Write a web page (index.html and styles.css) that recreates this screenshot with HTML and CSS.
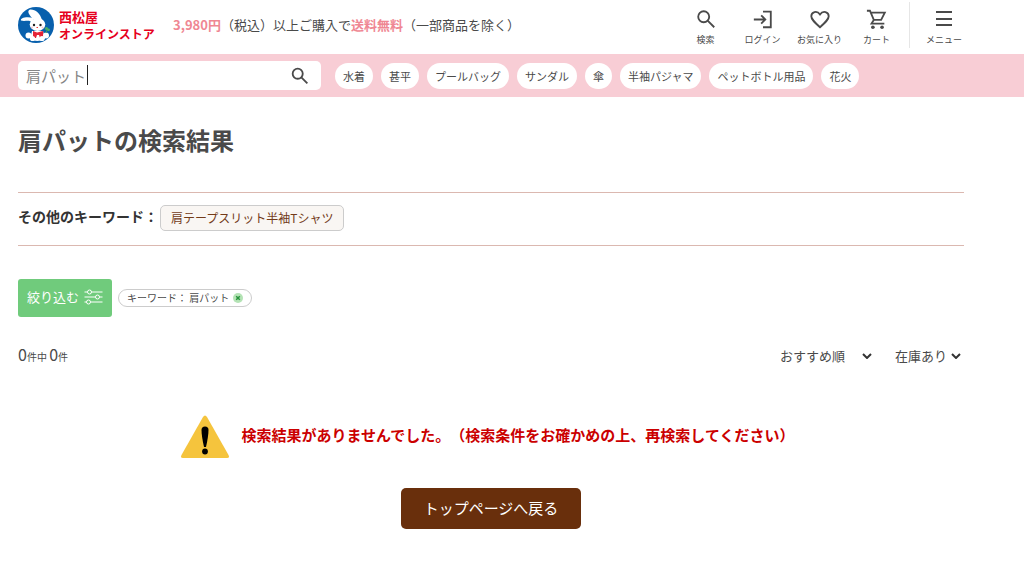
FILE: index.html
```html
<!DOCTYPE html>
<html lang="ja">
<head>
<meta charset="utf-8">
<meta name="viewport" content="width=device-width, initial-scale=1">
<title>肩パットの検索結果 | 西松屋オンラインストア</title>
<link rel="stylesheet" href="styles.css">
</head>
<body>
<header class="header">
  <a class="logo" href="#">
    <svg class="logo-mark" viewBox="0 0 36 36" aria-hidden="true">
      <circle cx="18" cy="18" r="18" fill="#0860ad"/>
      <path d="M14 16C12 12 7 15 3 13.500C2 11 8 9 16 11Z" fill="#fff"/>
      <path d="M15 12C12 9 8 4 12 2.500C17 2 22 6 24 13Z" fill="#fff"/>
      <ellipse cx="19.500" cy="17.500" rx="7.800" ry="6.500" fill="#fff"/>
      <path d="M14 24h11l2 8q-8 4-15 0Z" fill="#fff"/>
      <path d="M15 24l4 1.500 6-1.500 1 7h-4l-1-3h-2l-1 3h-3Z" fill="#e52335"/>
      <circle cx="10.500" cy="28.500" r="3" fill="#fff"/><circle cx="28" cy="28.500" r="3" fill="#fff"/>
      <circle cx="14.500" cy="31.500" r="2.600" fill="#fff"/><circle cx="24" cy="31.500" r="2.600" fill="#fff"/>
      <circle cx="16" cy="18" r="1.200" fill="#222"/><circle cx="22.500" cy="18" r="1.200" fill="#222"/>
      <path d="M18.500 20.500h1.500" stroke="#e33" stroke-width="1"/>
      <circle cx="14" cy="20.500" r="1" fill="#f8c4ca"/><circle cx="24.500" cy="20.500" r="1" fill="#f8c4ca"/>
      <path d="M28 26l1-3" stroke="#3b9e5a"/><circle cx="28.500" cy="21.500" r="1.600" fill="#4cae62"/><circle cx="30.500" cy="22.800" r="1.400" fill="#4cae62"/>
    </svg>
    <span class="logo-text"><span class="logo-name">西松屋</span><span class="logo-sub">オンラインストア</span></span>
  </a>
  <p class="promo"><strong>3,980円</strong>（税込）以上ご購入で<strong>送料無料</strong>（一部商品を除く）</p>
  <nav class="tools">
    <a class="tool" href="#"><svg class="icon" viewBox="0 0 24 24"><circle cx="9.500" cy="9.500" r="6"/><path d="M13.800 13.800L21 21"/></svg>検索</a>
    <a class="tool" href="#"><svg class="icon" viewBox="0 0 24 24"><path d="M12 4h8.500v17H12M2 12.500h12M10 8l4.500 4.500-4.500 4.500"/></svg>ログイン</a>
    <a class="tool" href="#"><svg class="icon" viewBox="0 0 24 24"><path d="M12 21C5 14.500 2.500 12 2.500 9C2.500 4.500 8.500 2 12 7C15.500 2 21.500 4.500 21.500 9C21.500 12 19 14.500 12 21Z"/></svg>お気に入り</a>
    <a class="tool" href="#"><svg class="icon" viewBox="0 0 24 24"><path d="M1 3h3.300l4.200 10h8L20.500 5H5.500M8.500 13L6 17H20"/><circle class="dot" cx="7.500" cy="21" r="2"/><circle class="dot" cx="17.500" cy="21" r="2"/></svg>カート</a>
    <button class="tool menu" type="button"><svg class="icon" viewBox="0 0 22 22"><path d="M3 4h16M3 11h16M3 17h16"/></svg>メニュー</button>
  </nav>
</header>
<div class="searchbar">
  <form class="search" role="search">
    <input class="search-input" type="text" aria-label="キーワード検索" value="肩パット">
    <span class="caret"></span>
    <button class="search-button" type="button" aria-label="検索"><svg class="icon" viewBox="0 0 24 24"><circle cx="9.500" cy="9.500" r="5.500"/><path d="M13.500 13.500L20 20"/></svg></button>
  </form>
  <nav class="tags">
    <a class="tag" href="#">水着</a><a class="tag" href="#">甚平</a><a class="tag" href="#">プールバッグ</a><a class="tag" href="#">サンダル</a><a class="tag" href="#">傘</a><a class="tag" href="#">半袖パジャマ</a><a class="tag" href="#">ペットボトル用品</a><a class="tag" href="#">花火</a>
  </nav>
</div>
<main class="main">
  <h1 class="title">肩パットの検索結果</h1>
  <section class="related">
    <h2 class="related-title">その他のキーワード：</h2>
    <a class="related-link" href="#">肩テープスリット半袖Tシャツ</a>
  </section>
  <div class="filters">
    <button class="filter-button" type="button">絞り込む
      <svg class="sliders" viewBox="0 0 18 16" aria-hidden="true"><path d="M0 3h3M7 3h11M0 8h11M15 8h3M0 13h2M6 13h12"/><circle cx="5" cy="3" r="2"/><circle cx="13" cy="8" r="2"/><circle cx="4" cy="13" r="2"/></svg>
    </button>
    <button class="chip" type="button">キーワード： 肩パット
      <svg class="chip-close" viewBox="0 0 10 10" aria-hidden="true"><circle cx="5" cy="5" r="5" fill="#b4e3b5"/><path d="M3.200 3.200l3.600 3.600M6.800 3.200L3.200 6.800" stroke="#27933b" stroke-width="1.500"/></svg>
    </button>
  </div>
  <div class="results-bar">
    <p class="count"><b>0</b>件中 <b>0</b>件</p>
    <div class="sorts">
      <span class="select-wrap wide"><select class="select" aria-label="並び順"><option>おすすめ順</option></select><svg class="chevron" viewBox="0 0 10 6"><path d="M1 1l4 4 4-4"/></svg></span>
      <span class="select-wrap"><select class="select" aria-label="在庫"><option>在庫あり</option></select><svg class="chevron" viewBox="0 0 10 6"><path d="M1 1l4 4 4-4"/></svg></span>
    </div>
  </div>
  <div class="notice">
    <svg class="warning" viewBox="0 0 50 44" aria-hidden="true"><path d="M23 2q2-3 4 0l21.500 38q1.500 3-1.500 3H3q-3 0-1.500-3Z" fill="#f5c43d"/><path d="M21.500 15q0-3.500 3.500-3.500t3.500 3.500q0 6-2.500 17h-2q-2.500-11-2.500-17Z"/><circle cx="25" cy="36.500" r="2.900"/></svg>
    <p class="notice-text">検索結果がありませんでした。（検索条件をお確かめの上、再検索してください）</p>
  </div>
  <a class="home-link" href="#">トップページへ戻る</a>
</main>
</body>
</html>
```
FILE: styles.css
```css
* { box-sizing: border-box; }
body {
  margin: 0;
  background: #fff;
  color: #4a4a4a;
  font-family: "Noto Sans CJK JP", sans-serif;
  font-size: 13px;
  text-spacing-trim: space-all;
}
a { color: inherit; text-decoration: none; }
p, h1, h2 { margin: 0; }
button, input, select { font: inherit; color: inherit; border: 0; background: none; padding: 0; margin: 0; }
.icon { width: 22px; height: 22px; fill: none; stroke: #4a4a4a; stroke-width: 2; }
.dot { fill: #4a4a4a; stroke: none; }

.header { display: flex; align-items: center; height: 54px; padding: 0 60px 4px 18px; }
.logo { display: flex; align-items: center; gap: 5px; }
.logo-mark { width: 36px; height: 36px; }
.logo-text { display: flex; flex-direction: column; width: 100px; color: #e60020; font-weight: 700; line-height: 17px; white-space: nowrap; }
.logo-name { font-size: 13px; }
.logo-sub { font-size: 12px; }
.promo { margin-left: 14px; line-height: 20px; white-space: nowrap; }
.promo strong { color: #ef8793; font-weight: 700; }
.tools { display: flex; margin-left: auto; align-items: center; }
.tool { display: flex; flex-direction: column; align-items: center; gap: 3px; width: 57px; padding-top: 3px; font-size: 9px; line-height: 13px; white-space: nowrap; }
.menu { justify-content: flex-end; width: 55px; height: 46px; margin-left: 4px; padding: 0 0 2px 14px; border-left: 1px solid #e6e6e6; }

.searchbar { display: flex; align-items: center; gap: 14px; padding: 7px 18px; background: #f8cdd5; }
.search { position: relative; display: flex; align-items: center; width: 303px; height: 29px; padding: 0 10px 0 8px; background: #fff; border-radius: 5px; }
.search-input { flex: 1; min-width: 0; height: 27px; color: #858585; font-size: 15px; outline: 0; }
.caret { position: absolute; left: 69px; top: 4px; width: 1px; height: 20px; background: #222; }
.search-button { display: flex; }
.tags { display: flex; gap: 8px; }
.tag { padding: 0 8px; border-radius: 13px; background: #fff; font-size: 11px; line-height: 26px; white-space: nowrap; }

.main { padding: 26px 60px 40px 18px; }
.title { font-size: 24px; line-height: 34px; font-weight: 700; }
.related { display: flex; align-items: center; gap: 2px; margin-top: 35px; padding: 12px 0 14px; border: solid #dbb8b0; border-width: 1px 0; }
.related-title { font-size: 14px; line-height: 20px; color: #333; white-space: nowrap; padding-bottom: 4px; }
.related-link { padding: 0 10px; border: 1px solid #ccc; border-radius: 5px; background: #f9f6f3; color: #733b19; font-size: 12px; line-height: 24px; }
.filters { display: flex; align-items: center; gap: 6px; margin-top: 33px; }
.filter-button { display: flex; align-items: center; gap: 5px; height: 38px; padding: 0 9px; border-radius: 3px; background: #70cb7c; color: #fff; font-size: 13px; line-height: 20px; padding-bottom: 2px; }
.sliders { width: 19px; height: 16px; fill: none; stroke: #fff; stroke-width: 1; }
.chip { display: flex; align-items: center; gap: 4px; height: 18px; padding: 0 8px; border: 1px solid #ccc; border-radius: 9px; font-size: 10px; line-height: 16px; }
.chip-close { width: 10px; height: 10px; }
.results-bar { display: flex; align-items: center; justify-content: space-between; margin-top: 25px; }
.count { font-size: 10px; line-height: 24px; }
.count b { font-size: 16px; font-weight: 400; }
.sorts { display: flex; gap: 20px; }
.select-wrap { position: relative; display: flex; align-items: center; width: 69px; }
.wide { width: 95px; }
.select { width: 100%; appearance: none; line-height: 20px; }
.chevron { position: absolute; right: 3px; width: 10px; height: 6px; fill: none; stroke: #333; stroke-width: 2; pointer-events: none; }
.notice { display: flex; align-items: center; justify-content: center; gap: 12px; margin-top: 46px; padding-right: 8px; }
.warning { width: 50px; height: 44px; }
.notice-text { color: #cb0000; font-size: 15px; font-weight: 700; line-height: 22px; padding-bottom: 4px; }
.home-link { display: block; width: 180px; margin: 29px auto 0; padding-bottom: 2px; border-radius: 5px; background: #692f0c; color: #fff; font-size: 15px; line-height: 39px; text-align: center; }
```
